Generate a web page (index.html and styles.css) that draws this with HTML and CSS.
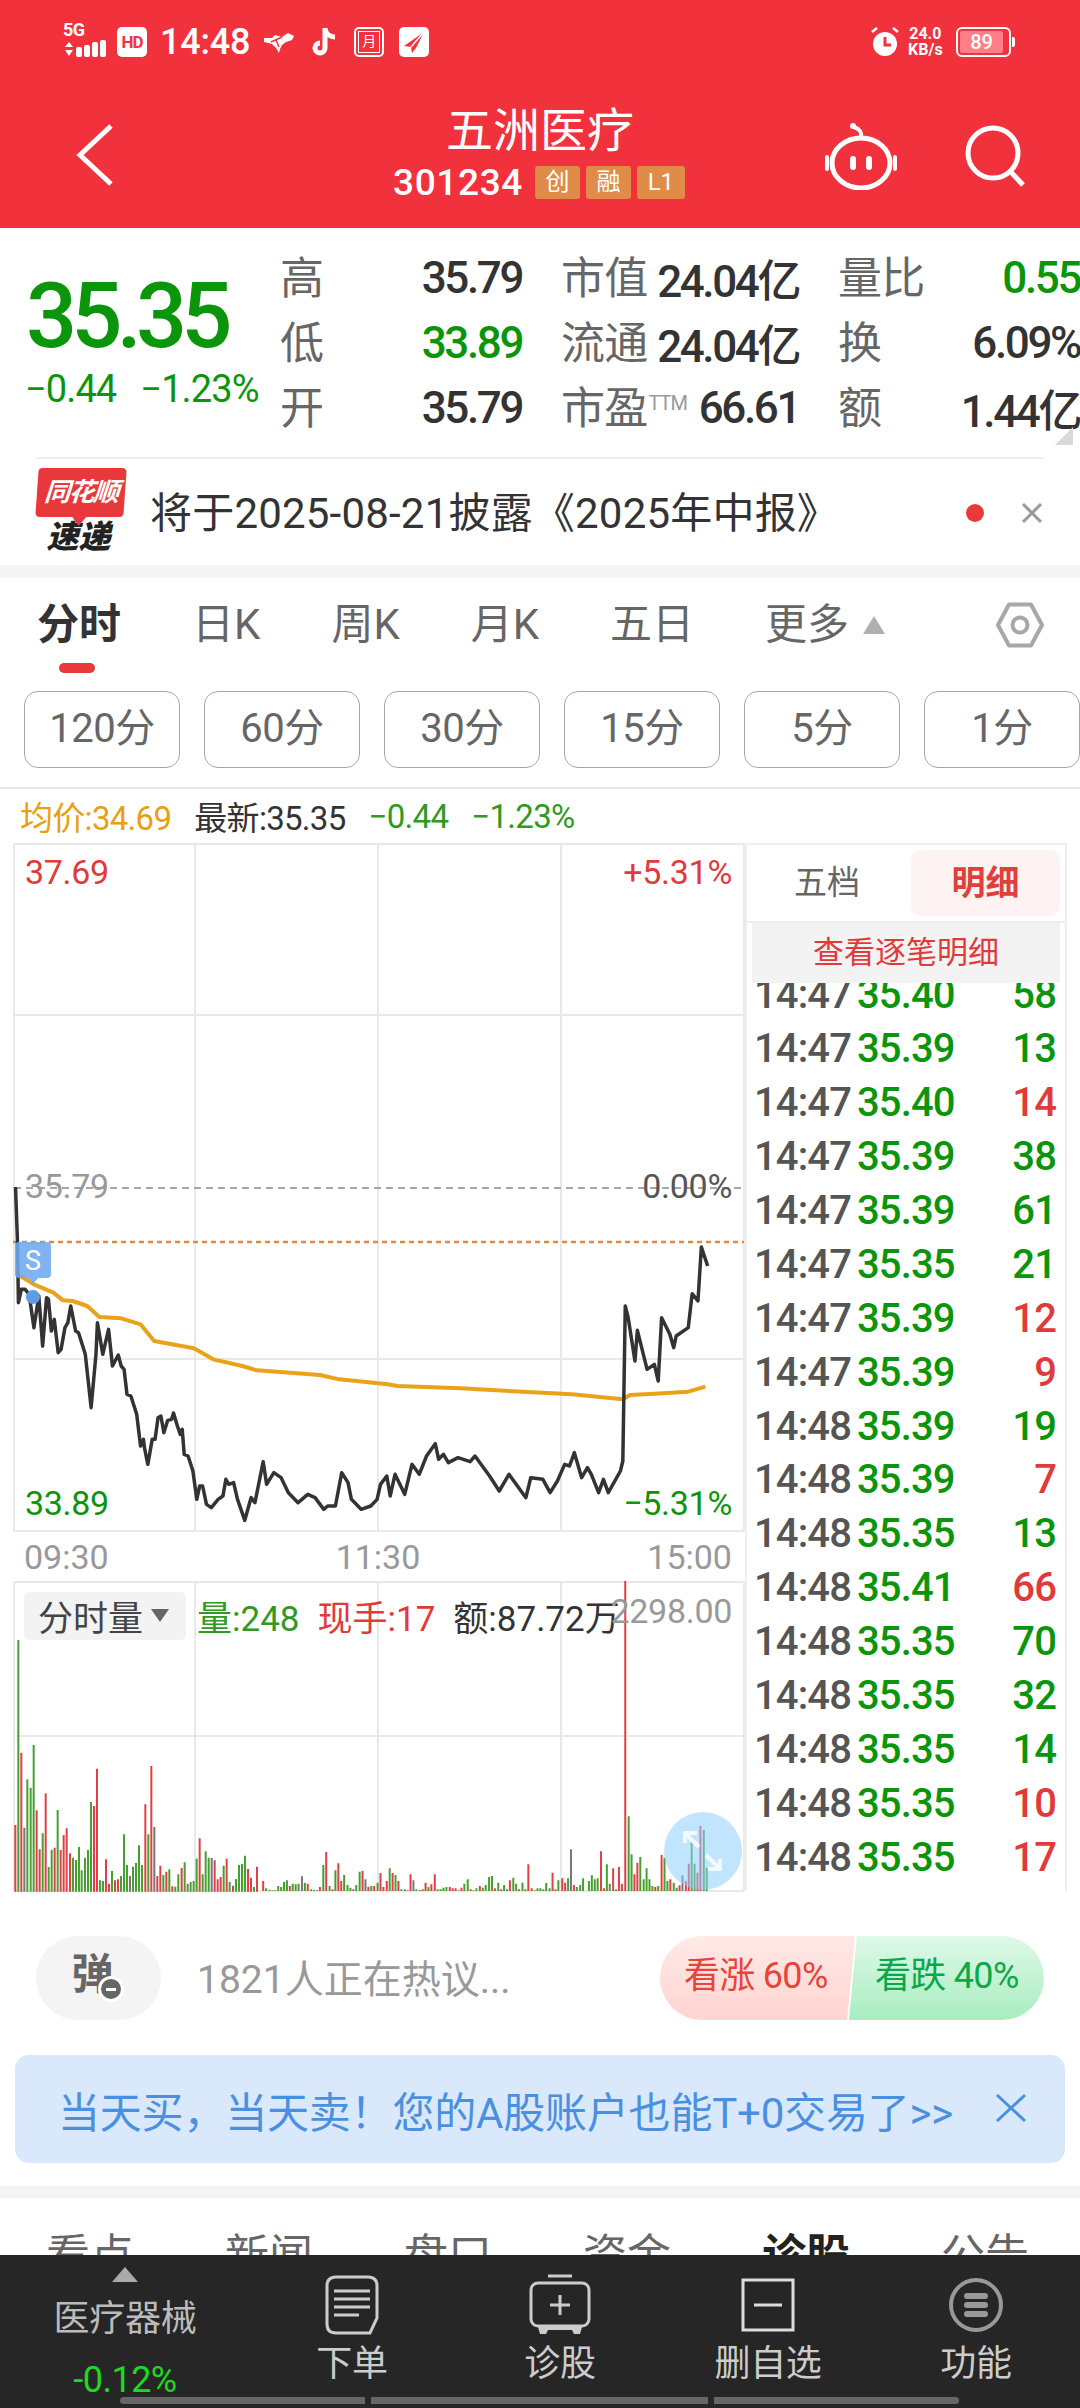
FILE: index.html
```html
<!DOCTYPE html>
<html lang="zh">
<head>
<meta charset="utf-8">
<title>五洲医疗</title>
<link rel="stylesheet" href="styles.css">
</head>
<body>
<div class="page">
  <header class="head">
    <div class="status">
      <div class="net">
        <span class="fiveg">5G</span>
        <svg class="sig" width="42" height="20" viewBox="0 0 42 20"><path d="M1 8l4-5 4 5zM1 11h8l-4 6z" fill="#fff"/><rect x="12" y="8" width="6" height="10" rx="2" fill="#fff"/><rect x="20" y="6" width="6" height="12" rx="2" fill="#fff"/><rect x="28" y="3" width="6" height="15" rx="2" fill="#fff"/><rect x="36" y="1" width="6" height="17" rx="2" fill="#fff"/></svg>
      </div>
      <span class="hd">HD</span>
      <span class="clock">14:48</span>
      <svg class="st-ic" width="32" height="24" viewBox="0 0 32 24"><path d="M1 8l8 0 3-3 7 2 6-4 6 3-2 4-6 2-4 3-2 4-1 4-3-5-4-4-8-2z" fill="#fff"/><path d="M8 12l11-5M13 10l3 7" stroke="#f2323c" stroke-width="1.500"/></svg>
      <svg class="st-ic" width="28" height="32" viewBox="0 0 28 32"><path d="M15 2v20a5 5 0 1 1-5-5" fill="none" stroke="#fff" stroke-width="5"/><path d="M15 3c1 5 5 8 10 8" fill="none" stroke="#fff" stroke-width="5"/></svg>
      <span class="boxed"><span class="boxed-in">月</span></span>
      <svg class="st-ic" width="30" height="30" viewBox="0 0 30 30"><rect width="30" height="30" rx="5" fill="#fff"/><path d="M25 5L5 19l7 1 1 6 4-5z" fill="#f2323c"/><path d="M25 5L12 20" stroke="#fff" stroke-width="1.500"/></svg>
      <span class="st-gap"></span>
      <svg class="st-ic" width="32" height="32" viewBox="0 0 32 32"><circle cx="16" cy="18" r="12" fill="#fff"/><path d="M16 11v8h6" fill="none" stroke="#f2323c" stroke-width="3"/><path d="M3 6l5-4M29 6l-5-4" stroke="#fff" stroke-width="2.500"/></svg>
      <span class="speed"><span>24.0</span><span>KB/s</span></span>
      <span class="batt"><span class="batt-fill">89</span></span>
      <span class="batt-tip"></span>
    </div>
    <div class="nav">
      <svg class="back" width="40" height="66" viewBox="0 0 40 66"><path d="M36 4L5 33l31 29" fill="none" stroke="#fff" stroke-width="5"/></svg>
      <div class="title">
        <div class="name">五洲医疗</div>
        <div class="code-row"><span class="code">301234</span><span class="tag">创</span><span class="tag">融</span><span class="tag tag-l">L1</span></div>
      </div>
      <svg class="robot" width="74" height="68" viewBox="0 0 74 68"><ellipse cx="37" cy="41" rx="29" ry="25" fill="none" stroke="#fff" stroke-width="5"/><path d="M37 16c1-6-1-9-7-11" fill="none" stroke="#fff" stroke-width="4"/><circle cx="29" cy="4" r="3" fill="#fff"/><rect x="26" y="34" width="6" height="14" rx="3" fill="#fff"/><rect x="42" y="34" width="6" height="14" rx="3" fill="#fff"/><path d="M3 35v12M71 35v12" stroke="#fff" stroke-width="4" stroke-linecap="round"/></svg>
      <svg class="search" width="62" height="62" viewBox="0 0 62 62"><circle cx="28" cy="28" r="25" fill="none" stroke="#fff" stroke-width="5"/><path d="M45 46l13 14" stroke="#fff" stroke-width="5"/></svg>
    </div>
  </header>

  <section class="quote">
    <div class="price-box">
      <div class="price">35.35</div>
      <div class="delta"><span>−0.44</span><span>−1.23%</span></div>
    </div>
    <div class="stats">
      <div class="stat"><span class="lab">高</span><span class="val">35.79</span></div>
      <div class="stat"><span class="lab">市值</span><span class="val">24.04亿</span></div>
      <div class="stat"><span class="lab">量比</span><span class="val up-green">0.55</span></div>
      <div class="stat"><span class="lab">低</span><span class="val up-green">33.89</span></div>
      <div class="stat"><span class="lab">流通</span><span class="val">24.04亿</span></div>
      <div class="stat"><span class="lab">换</span><span class="val">6.09%</span></div>
      <div class="stat"><span class="lab">开</span><span class="val">35.79</span></div>
      <div class="stat"><span class="lab">市盈<sup class="ttm">TTM</sup></span><span class="val">66.61</span></div>
      <div class="stat"><span class="lab">额</span><span class="val">1.44亿</span></div>
    </div>
    <svg class="corner" width="18" height="18" viewBox="0 0 18 18"><path d="M18 0v18H0z" fill="#d8d8d8"/></svg>
  </section>

  <section class="notice">
    <div class="logo">
      <span class="logo-top"><span class="logo-skew">同花顺</span></span>
      <span class="logo-bot">速递</span>
    </div>
    <span class="notice-text">将于2025-08-21披露《2025年中报》</span>
    <span class="dot"></span>
    <svg class="x-close" width="22" height="22" viewBox="0 0 22 22"><path d="M2 2l18 18M20 2L2 20" stroke="#999" stroke-width="3"/></svg>
  </section>

  <div class="band"></div>

  <nav class="tabs">
    <span class="tab tab-on">分时</span>
    <span class="tab">日K</span>
    <span class="tab">周K</span>
    <span class="tab">月K</span>
    <span class="tab">五日</span>
    <span class="tab tab-more">更多<i class="tri"></i></span>
    <svg class="hex" width="48" height="46" viewBox="0 0 48 46"><path d="M13 2.500h22L46 23 35 43.500H13L2 23z" fill="none" stroke="#a8a8a8" stroke-width="4" stroke-linejoin="round"/><circle cx="24" cy="23" r="7.500" fill="none" stroke="#a8a8a8" stroke-width="4"/></svg>
  </nav>

  <div class="periods">
    <span class="period">120分</span>
    <span class="period">60分</span>
    <span class="period">30分</span>
    <span class="period">15分</span>
    <span class="period">5分</span>
    <span class="period">1分</span>
  </div>

  <div class="legend">
    <span class="c-avg">均价:34.69</span>
    <span class="c-dark">最新:35.35</span>
    <span class="c-grn">−0.44</span>
    <span class="c-grn">−1.23%</span>
  </div>

  <section class="chart-wrap">
    <div class="charts">
      <div class="price-chart">
        <svg class="fill-svg" viewBox="13 842 732 689" preserveAspectRatio="none">
          <g class="grid">
            <path d="M14 843H744M14 1014H744M14 1358H744M14 1530H744M14 843V1530M744 843V1530M195 843V1530M378 843V1530M561 843V1530"/>
          </g>
          <path d="M14 1187H744" class="dash-pre"/>
          <path d="M13 1241H744" class="dash-last"/>
          <g transform="translate(0 1100) scale(.4847 .33333)">
            <path class="line-avg" d="M36 520L70 550 110 575 130 598 150 600 180 615 205 648 250 652 290 670 318 720 400 742 440 775 500 795 530 808 660 822 700 835 800 850 820 855 950 862 1180 880 1285 895 1300 882 1350 878 1420 872 1455 857"/>
            <path class="line-px" d="M32 258L36 420 38 605 44 565 52 565 60 580 70 680 80 585 88 735 96 590 100 595 106 690 112 655 120 755 126 745 134 680 140 665 146 615 156 690 162 695 176 760 188 920 198 760 201 665 212 760 224 685 232 795 244 762 250 795 256 805 262 880 270 885 282 940 290 1035 296 1015 298 1040 305 1090 314 1015 320 1015 326 950 332 945 338 995 346 958 354 955 358 936 366 975 372 1000 376 985 380 1060 388 1065 398 1110 406 1195 412 1155 418 1155 426 1210 436 1220 450 1195 460 1185 466 1135 472 1150 482 1145 490 1195 505 1258 518 1190 526 1205 543 1082 550 1150 565 1115 580 1130 595 1175 615 1205 635 1180 650 1190 668 1225 676 1215 692 1215 705 1115 718 1145 725 1195 745 1225 765 1215 778 1195 785 1150 798 1125 805 1185 815 1120 825 1150 835 1180 850 1090 865 1120 880 1065 898 1028 905 1075 915 1060 925 1085 945 1070 970 1082 980 1065 995 1095 1010 1125 1030 1170 1050 1120 1085 1190 1095 1130 1120 1135 1135 1175 1150 1140 1165 1090 1175 1095 1185 1055 1200 1130 1212 1100 1220 1120 1235 1175 1245 1135 1255 1175 1280 1110 1285 1080 1290 615 1296 650 1310 780 1315 688 1335 805 1350 790 1358 840 1365 650 1382 700 1390 740 1395 705 1420 680 1428 578 1440 600 1447 438 1460 495"/>
          </g>
          <path d="M15 1245a4 4 0 0 1 4-4H47a4 4 0 0 1 4 4V1273a4 4 0 0 1-4 4H38l-5 6-5-6H19a4 4 0 0 1-4-4z" fill="#6ea8f0" fill-opacity=".88"/>
          <text x="33" y="1269" class="s-mark">S</text>
          <circle cx="33" cy="1296" r="7" fill="#5e9be8"/>
        </svg>
        <span class="cl cl-tl">37.69</span>
        <span class="cl cl-tr">+5.31%</span>
        <span class="cl cl-ml">35.79</span>
        <span class="cl cl-mr">0.00%</span>
        <span class="cl cl-bl">33.89</span>
        <span class="cl cl-br">−5.31%</span>
      </div>
      <div class="axis"><span>09:30</span><span>11:30</span><span>15:00</span></div>
      <div class="vol-chart">
        <svg class="fill-svg" viewBox="13 1580 732 311" preserveAspectRatio="none">
          <g class="grid">
            <path d="M14 1581H744M14 1735H744M14 1890H744M14 1581V1890M744 1581V1890M195 1581V1890M378 1581V1890M561 1581V1890"/>
          </g>
          <g transform="translate(10 1660) scale(.33333)">
            <path class="bar-g" d="M25 692V-63M52 692V355M62 692V380M71 692V252M98 692V517M116 692V618M125 692V566M143 692V447M189 692V590M198 692V597M207 692V558M215 692V628M225 692V590M234 692V567M243 692V423M270 692V658M279 692V660M306 692V630M333 692V645M342 692V520M351 692V612M369 692V617M378 692V606M387 692V553M396 692V612M415 692V520M460 692V642M478 692V625M496 692V677M505 692V640M524 692V604M542 692V663M551 692V660M560 692V593M578 692V640M587 692V571M596 692V590M641 692V614M659 692V663M678 692V654M687 692V612M696 692V609M705 692V584M732 692V678"/>
            <path class="bar-r" d="M16 692V492M34 692V275M80 692V448M89 692V565M107 692V397M134 692V560M152 692V567M161 692V522M170 692V502M180 692V577M252 692V435M261 692V323M288 692V595M297 692V668M315 692V658M324 692V655M406 692V430M424 692V315M442 692V645M451 692V614M469 692V632M487 692V676M515 692V621M569 692V532M614 692V598M623 692V655M632 692V648M650 692V593M669 692V674M714 692V624M723 692V650M741 692V617"/>
            <path class="bar-y" d="M43 692V500M360 692V645M433 692V498M533 692V668M605 692V591"/>
          </g>
          <g transform="translate(0 1560) scale(.4847 .33333)">
            <path class="bar-g" d="M549 990V982M556 990V986M562 990V988M574 990V975M580 990V978M586 990V963M592 990V958M604 990V968M610 990V970M616 990V968M629 990V966M642 990V985M648 990V987M667 990V912M680 990V975M692 990V928M710 990V942M717 990V972M723 990V980M735 990V972M742 990V932M766 990V975M779 990V965M804 990V922M816 990V942M828 990V985M835 990V985M859 990V985M866 990V987M884 990V978M903 990V985M909 990V985M915 990V980M921 990V978M946 990V988M958 990V968M965 990V955M977 990V988M983 990V982M996 990V980M1002 990V972M1009 990V948M1015 990V945M1028 990V965M1040 990V972M1046 990V985M1059 990V950M1065 990V968M1078 990V965M1084 990V985M1103 990V988M1109 990V982M1115 990V982M1121 990V985M1127 990V966M1134 990V982M1152 990V958M1172 990V952M1190 990V978M1197 990V972M1203 990V952M1215 990V960M1221 990V943M1227 990V955M1233 990V952M1252 990V910M1258 990V968M1271 990V985M1297 990V766M1303 990V880M1321 990V888M1328 990V955M1334 990V922M1340 990V955M1346 990V975M1358 990V975M1371 990V890M1377 990V960M1390 990V965M1396 990V980M1427 990V845M1433 990V908M1452 990V807M1458 990V920"/>
            <path class="bar-r" d="M543 990V960M568 990V988M598 990V975M635 990V968M654 990V988M660 990V978M673 990V873M686 990V985M698 990V907M704 990V960M729 990V985M748 990V930M760 990V977M772 990V975M785 990V936M791 990V978M798 990V960M810 990V936M822 990V960M841 990V988M847 990V940M872 990V985M878 990V965M890 990V970M897 990V940M928 990V978M934 990V982M940 990V982M952 990V980M971 990V985M990 990V975M1021 990V982M1034 990V985M1052 990V958M1071 990V985M1090 990V910M1097 990V982M1140 990V935M1146 990V985M1160 990V952M1166 990V965M1184 990V972M1209 990V990M1240 990V871M1246 990V982M1265 990V922M1277 990V918M1283 990V968M1290 990V60M1309 990V940M1315 990V905M1352 990V978M1365 990V882M1383 990V955M1402 990V973M1415 990V960M1421 990V908M1439 990V935M1445 990V795"/>
            <path class="bar-y" d="M623 990V946M754 990V955M853 990V958M1178 990V865M1408 990V943"/>
          </g>
          <circle cx="703" cy="1850" r="39" fill="#8fd0ff" fill-opacity=".55"/>
          <path d="M685 1842v-10h12M685 1832l14 14M720 1858v10h-12M720 1868l-14-14" fill="none" stroke="#fff" stroke-opacity=".8" stroke-width="4"/>
        </svg>
        <div class="vol-legend">
          <span class="vol-pill">分时量<i class="tri-down"></i></span>
          <span class="c-grn">量:248</span>
          <span class="c-red">现手:17</span>
          <span class="c-dark">额:87.72万</span>
        </div>
        <span class="cl cl-vol">2298.00</span>
      </div>
    </div>

    <aside class="ticks">
      <div class="tick-tabs"><span class="tick-tab">五档</span><span class="tick-tab tick-on">明细</span></div>
      <div class="tick-more">查看逐笔明细</div>
      <div class="tick-list">
        <div class="tick-rows">
          <div class="tick"><span>14:47</span><span class="c-price">35.40</span><span class="c-price">58</span></div>
          <div class="tick"><span>14:47</span><span class="c-price">35.39</span><span class="c-price">13</span></div>
          <div class="tick"><span>14:47</span><span class="c-price">35.40</span><span class="c-red">14</span></div>
          <div class="tick"><span>14:47</span><span class="c-price">35.39</span><span class="c-price">38</span></div>
          <div class="tick"><span>14:47</span><span class="c-price">35.39</span><span class="c-price">61</span></div>
          <div class="tick"><span>14:47</span><span class="c-price">35.35</span><span class="c-price">21</span></div>
          <div class="tick"><span>14:47</span><span class="c-price">35.39</span><span class="c-red">12</span></div>
          <div class="tick"><span>14:47</span><span class="c-price">35.39</span><span class="c-red">9</span></div>
          <div class="tick"><span>14:48</span><span class="c-price">35.39</span><span class="c-price">19</span></div>
          <div class="tick"><span>14:48</span><span class="c-price">35.39</span><span class="c-red">7</span></div>
          <div class="tick"><span>14:48</span><span class="c-price">35.35</span><span class="c-price">13</span></div>
          <div class="tick"><span>14:48</span><span class="c-price">35.41</span><span class="c-red">66</span></div>
          <div class="tick"><span>14:48</span><span class="c-price">35.35</span><span class="c-price">70</span></div>
          <div class="tick"><span>14:48</span><span class="c-price">35.35</span><span class="c-price">32</span></div>
          <div class="tick"><span>14:48</span><span class="c-price">35.35</span><span class="c-price">14</span></div>
          <div class="tick"><span>14:48</span><span class="c-price">35.35</span><span class="c-red">10</span></div>
          <div class="tick"><span>14:48</span><span class="c-price">35.35</span><span class="c-red">17</span></div>
        </div>
      </div>
    </aside>
  </section>

  <section class="social">
    <div class="danmu"><span class="danmu-ch">弹</span><span class="danmu-off"></span></div>
    <span class="hot">1821人正在热议...</span>
    <div class="vote">
      <span class="vote-up">看涨 60%</span>
      <span class="vote-down">看跌 40%</span>
    </div>
  </section>

  <section class="promo">
    <span>当天买，当天卖！您的A股账户也能T+0交易了&gt;&gt;</span>
    <svg class="promo-x" width="32" height="30" viewBox="0 0 32 30"><path d="M2 2l28 26M30 2L2 28" stroke="#4a90e0" stroke-width="3"/></svg>
  </section>

  <div class="band band-2"></div>

  <nav class="news-tabs">
    <span>看点</span><span>新闻</span><span>盘口</span><span>资金</span><span class="news-on">诊股</span><span>公告</span>
  </nav>

  <footer class="bar">
    <div class="sector">
      <i class="tri-up"></i>
      <span class="sector-name">医疗器械</span>
      <span class="sector-pct">-0.12%</span>
    </div>
    <div class="act">
      <svg width="56" height="62" viewBox="0 0 56 62"><path d="M12 3h32q9 0 9 9v32l-7 15H12q-9 0-9-9V12q0-9 9-9z" fill="none" stroke="#ccc" stroke-width="3"/><path d="M10 17h36M10 25h36M10 33h36" stroke="#ccc" stroke-width="3"/><path d="M10 41h25" stroke="#ccc" stroke-width="3"/></svg>
      <span>下单</span>
    </div>
    <div class="act">
      <svg width="62" height="62" viewBox="0 0 62 62"><path d="M19 2h24" stroke="#ccc" stroke-width="3"/><rect x="2" y="9" width="58" height="43" rx="7" fill="none" stroke="#ccc" stroke-width="3"/><path d="M9 53h44l-2 7h-6l-2-4H19l-2 4h-6z" fill="#ccc"/><path d="M31 21v20M21 31h20" stroke="#ccc" stroke-width="3"/></svg>
      <span>诊股</span>
    </div>
    <div class="act">
      <svg width="62" height="62" viewBox="0 0 62 62"><rect x="6" y="6" width="50" height="50" fill="none" stroke="#ddd" stroke-width="3"/><path d="M17 31h28" stroke="#ddd" stroke-width="3"/></svg>
      <span>删自选</span>
    </div>
    <div class="act">
      <svg width="62" height="62" viewBox="0 0 62 62"><circle cx="31" cy="31" r="25" fill="none" stroke="#999" stroke-width="4"/><rect x="19" y="19" width="24" height="6" rx="3" fill="#999"/><rect x="19" y="28" width="24" height="6" rx="3" fill="#999"/><rect x="19" y="37" width="24" height="6" rx="3" fill="#999"/></svg>
      <span>功能</span>
    </div>
    <div class="scroll"><i></i><i class="s2"></i><i class="s3"></i></div>
  </footer>
</div>
</body>
</html>
```
FILE: styles.css
```css
*{box-sizing:border-box}
html,body{margin:0;padding:0;background:#fff}
body{font-family:Roboto,"Noto Sans CJK SC",sans-serif;color:#333}
.page{position:relative;width:1080px;height:2408px;overflow:hidden;background:#fff}
i{display:block;font-style:normal}

/* header */
.head{height:228px;background:#f1313b;color:#fff;display:flex;flex-direction:column}
.status{height:84px;display:flex;align-items:center;padding:0 0 0 63px}
.net{position:relative;width:50px;height:34px}
.fiveg{position:absolute;left:0;top:-4px;font-size:18px;font-weight:700;line-height:18px;letter-spacing:-.5px}
.sig{position:absolute;left:1px;top:14px}
.hd{width:30px;height:30px;margin-left:4px;background:#fff;color:#f2323c;border-radius:5px;font-size:17px;font-weight:700;line-height:30px;text-align:center;letter-spacing:-1px}
.clock{margin-left:13px;font-size:36px;font-weight:500;letter-spacing:-.2px}
.st-ic{display:block;flex:none}
.clock + .st-ic{margin-left:13px}
.st-ic + .st-ic{margin-left:15px}
.boxed{width:30px;height:30px;margin-left:16px;border:2.500px solid #fff;border-radius:5px;padding:2px}
.boxed-in{display:block;width:100%;height:100%;border:1.500px solid #fff;font-size:14px;line-height:18px;text-align:center}
.boxed + .st-ic{margin-left:15px}
.st-gap{width:440px;flex:none}
.speed{margin-left:5px;width:38px;display:flex;flex-direction:column;align-items:center;font-size:16px;font-weight:700;line-height:16px}
.batt{margin-left:12px;width:55px;height:30px;border:2px solid #fff;border-radius:6px;padding:2px}
.batt-fill{display:block;height:100%;width:90%;background:#ff7f88;border-radius:2px;font-size:20px;font-weight:500;line-height:22px;text-align:center}
.batt-tip{width:3px;height:10px;background:#fff;margin-left:1px;border-radius:0 2px 2px 0}
.nav{position:relative;flex:1;display:flex;justify-content:center}
.title{display:flex;flex-direction:column;align-items:center}
.name{font-size:47px;line-height:58px;margin-top:18px}
.code-row{display:flex;align-items:center;margin-top:4px;height:36px}
.code{font-size:37px;font-weight:500;letter-spacing:.6px;margin-right:12px;margin-left:-2px}
.tag{width:45px;height:33px;margin-right:6px;background:#e08c48;border-radius:3px;font-size:24px;line-height:32px;text-align:center}
.tag-l{width:48px;margin-right:0;font-size:24px}
.back{position:absolute;left:75px;top:38px}
.robot{position:absolute;left:824px;top:38px}
.search{position:absolute;left:965px;top:41px}

/* quote */
.quote{position:relative;height:229px;display:flex;align-items:flex-start}
.price-box{width:280px;flex:none;padding-left:26px}
.price{font-size:90px;font-weight:500;line-height:90px;margin-top:44px;color:#0b950b;letter-spacing:-5.800px}
.delta{display:flex;gap:24px;margin-top:5px;margin-left:-1px;font-size:38px;line-height:44px;color:#0b950b;letter-spacing:-.9px;white-space:nowrap}
.stats{display:grid;grid-template-columns:242px 238px 242px;column-gap:39px;grid-auto-rows:65px;padding-top:17px;width:800px}
.stat{display:flex;justify-content:space-between;align-items:center;white-space:nowrap}
.lab{font-size:44px;color:#666;letter-spacing:-.8px;margin-bottom:5px}
.val{font-size:44px;font-weight:500;color:#333;letter-spacing:-2.400px}
.up-green{color:#0b950b}
.ttm{font-size:20px;color:#999;vertical-align:14px;line-height:0;letter-spacing:-1px;margin-left:1px}
.corner{position:absolute;right:7px;top:199px}

/* notice */
.notice{height:108px;margin:0 36px;border-top:2px solid #eee;display:flex;align-items:center;position:relative}
.logo{width:90px;display:flex;flex-direction:column;align-items:center;flex:none}
.logo-top{width:88px;height:49px;background:#e8383c;border-radius:4px;transform:skewX(-4deg);position:relative;text-align:center}
.logo-top::after{content:"";position:absolute;left:37px;bottom:-9px;border:7px solid transparent;border-bottom:0;border-top:9px solid #e8383c}
.logo-skew{display:block;font-size:26px;font-weight:700;line-height:49px;color:#fff;font-style:italic;letter-spacing:-1.500px;white-space:nowrap}
.logo-bot{font-size:32px;font-weight:900;line-height:38px;margin-top:1px;margin-right:5px;font-style:italic;color:#222}
.notice-text{margin-left:24px;margin-bottom:5px;font-size:42px;letter-spacing:.2px;color:#333;white-space:nowrap}
.dot{position:absolute;left:930px;top:45px;width:18px;height:18px;border-radius:50%;background:#e83a3a}
.x-close{position:absolute;left:985px;top:43px}
.band{height:13px;background:#f4f4f4}

/* tabs */
.tabs{position:relative;height:113px;display:flex;align-items:flex-start;gap:71px;padding:20px 0 0 37px;font-size:42px;line-height:54px;color:#666}
.tab{position:relative;white-space:nowrap}
.tab-on{color:#333;font-weight:700}
.tab-on::after{content:"";position:absolute;left:22px;top:65px;width:36px;height:10px;background:#e8383c;border-radius:5px}
.tab-more{display:flex;align-items:center}
.tri{width:0;height:0;margin-left:14px;border-left:11px solid transparent;border-right:11px solid transparent;border-bottom:18px solid #b0b0b0}
.hex{position:absolute;left:996px;top:24px}
.periods{display:flex;gap:24px;padding-left:24px;height:96px}
.period{width:156px;height:77px;border:1.500px solid #a6a6a6;border-radius:14px;font-size:40px;line-height:73px;text-align:center;color:#666;letter-spacing:-.5px}
.legend{height:56px;border-top:2px solid #e8e8e8;display:flex;align-items:center;padding-left:20px;font-size:33px;letter-spacing:-.7px;white-space:nowrap}
.legend span{margin-right:23px}
.c-avg{color:#e8a010}
.c-dark{color:#333}
.c-grn{color:#2f9a22}
.c-red{color:#e03a3a}
.c-price{color:#0b950b}

/* charts */
.chart-wrap{display:flex;height:1048px;padding-left:13px}
.charts{width:732px;flex:none}
.price-chart{position:relative;height:689px}
.fill-svg{position:absolute;left:0;top:0;width:100%;height:100%;display:block}
.grid path{fill:none;stroke:#e9e9e9;stroke-width:2}
.dash-pre{fill:none;stroke:#a6a6a6;stroke-width:2;stroke-dasharray:7 5}
.dash-last{fill:none;stroke:#e8873a;stroke-width:2.500;stroke-dasharray:5 4}
.line-px,.line-avg{fill:none;stroke-linejoin:round;vector-effect:non-scaling-stroke}
.line-px{stroke:#333;stroke-width:3.500}
.line-avg{stroke:#e9a21a;stroke-width:4}
.s-mark{font-size:27px;fill:#fff;text-anchor:middle}
.cl{position:absolute;font-size:34px;line-height:40px;letter-spacing:-.3px;white-space:nowrap}
.cl-tl{left:12px;top:9px;color:#e03a3a}
.cl-tr{right:13px;top:9px;color:#e03a3a}
.cl-ml{left:12px;top:323px;color:#999}
.cl-mr{right:13px;top:323px;color:#555}
.cl-bl{left:12px;top:640px;color:#0b950b}
.cl-br{right:13px;top:640px;color:#0b950b}
.cl-vol{right:13px;top:10px;color:#999}
.axis{height:49px;display:flex;justify-content:space-between;padding:4px 13px 0 11px;font-size:34px;line-height:42px;color:#999}
.vol-chart{position:relative;height:311px}
.bar-g,.bar-r,.bar-y{fill:none;stroke-width:2;vector-effect:non-scaling-stroke}
.bar-g{stroke:#46a02f}
.bar-r{stroke:#e04045}
.bar-y{stroke:#777}
.vol-legend{position:absolute;left:11px;top:9px;display:flex;align-items:center;font-size:35px;white-space:nowrap}
.vol-legend span{margin-right:18px}
.vol-legend .vol-pill{margin-right:11px}
.vol-pill{display:flex;align-items:center;width:162px;height:48px;padding-left:14px;background:#f3f3f3;border-radius:6px;color:#444;font-size:35px}
.tri-down{width:0;height:0;margin-left:8px;border-left:9px solid transparent;border-right:9px solid transparent;border-top:13px solid #666}

/* ticks */
.ticks{width:322px;flex:none;height:1048px;border:2px solid #eee;border-bottom:0;position:relative;display:flex;flex-direction:column}
.tick-tabs{display:flex;height:78px;padding:5px 5px 5px 0;border-bottom:2px solid #eee;flex:none}
.tick-tab{flex:1;font-size:33px;line-height:66px;text-align:center;color:#666;padding-right:4px}
.tick-on{flex:0 0 149px;background:#fdf3f2;border-radius:10px;color:#e0403c;font-weight:700;font-size:34px;padding-right:0}
.tick-more{position:relative;z-index:1;flex:none;height:60px;margin:0 5px;background:#f3f3f3;color:#e03a3a;font-size:31px;line-height:60px;text-align:center}
.tick-list{flex:1;overflow:hidden}
.tick-rows{margin-top:-15px}
.tick{display:flex;height:53.900px;padding:0 9px 0 7px;align-items:center;font-size:40px;font-weight:500;letter-spacing:-.9px;color:#555}
.tick span:nth-child(1){width:103px}
.tick span:nth-child(2){width:100px}
.tick span:nth-child(3){margin-left:auto}

/* social */
.social{position:relative;height:166px;display:flex;align-items:flex-start;padding:45px 36px 0}
.danmu{position:relative;width:125px;height:84px;background:#f4f4f4;border-radius:42px;flex:none;text-align:center}
.danmu-ch{font-size:42px;font-weight:700;line-height:78px;color:#666;margin-left:-12px}
.danmu-off{position:absolute;left:62px;top:40px;width:26px;height:26px;background:#666;border:3px solid #fff;border-radius:50%}
.danmu-off::after{content:"";position:absolute;left:5px;top:9px;width:10px;height:3px;background:#fff}
.hot{margin-left:36px;font-size:39px;line-height:88px;color:#999;white-space:nowrap}
.vote{position:absolute;left:660px;top:45px;width:384px;height:84px;border-radius:42px;overflow:hidden;font-size:36px;line-height:80px;letter-spacing:-.7px;white-space:nowrap}
.vote-up,.vote-down{position:absolute;top:0;height:100%}
.vote-up{left:0;width:195px;padding-left:24px;color:#e8443a;background:linear-gradient(#ffeae7,#ffd4d0);clip-path:polygon(0 0,100% 0,96% 100%,0 100%)}
.vote-down{right:0;width:195px;padding-left:26px;color:#0aa84a;background:linear-gradient(#dff9e8,#a8edbf);clip-path:polygon(4% 0,100% 0,100% 100%,0 100%)}
.promo{position:relative;height:108px;margin:-2px 15px 0;background:#d9e8fb;border-radius:14px;display:flex;align-items:center;padding-left:43px;font-size:42px;color:#4a90e0;letter-spacing:-.2px;white-space:nowrap;flex:none}
.promo-x{position:absolute;left:980px;top:38px}
.band-2{margin-top:23px;height:12px}
.news-tabs{height:70px;display:flex;padding:28px 0 0 46px;gap:91px;font-size:44px;line-height:60px;color:#666}
.news-tabs span{flex:none}
.news-on{color:#222;font-weight:700}

/* bottom */
.bar{position:absolute;left:0;bottom:0;width:1080px;height:153px;background:#262626;display:flex;color:#ccc}
.sector{position:absolute;left:50px;top:0;width:150px;display:flex;flex-direction:column;align-items:center}
.tri-up{width:0;height:0;margin-top:12px;border-left:13px solid transparent;border-right:13px solid transparent;border-bottom:15px solid #aaa}
.sector-name{margin-top:13px;font-size:36px;line-height:48px;color:#bbb;letter-spacing:-.3px;white-space:nowrap}
.sector-pct{margin-top:16px;font-size:36px;line-height:42px;color:#1fd81f;letter-spacing:-.5px}
.act{position:absolute;top:19px;display:flex;flex-direction:column;align-items:center;width:120px;font-size:36px;line-height:46px;white-space:nowrap}
.act svg{display:block}
.act span{margin-top:5px;letter-spacing:-.3px}
.act:nth-of-type(2){left:292px}
.act:nth-of-type(3){left:500px}
.act:nth-of-type(4){left:708px}
.act:nth-of-type(5){left:916px}
.scroll{position:absolute;left:120px;top:142px;display:flex;gap:6px;height:7px}
.scroll i{width:245px;height:7px;background:#666;border-radius:4px 0 0 4px}
.scroll .s2{width:337px;border-radius:0}
.scroll .s3{width:245px;border-radius:0 4px 4px 0}
```
